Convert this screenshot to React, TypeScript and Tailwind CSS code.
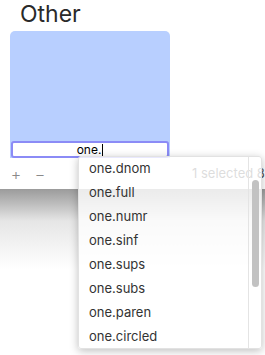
import React from 'react';

const items = ['one.dnom', 'one.full', 'one.numr', 'one.sinf', 'one.sups', 'one.subs', 'one.paren', 'one.circled'];

const App: React.FC = () => {
  return (
    <div className="relative w-[265px] h-[355px] overflow-hidden bg-white font-['Inter','Liberation_Sans',sans-serif]">
      <div className="h-[31px] pl-[20px] pt-[1px] text-[23px] leading-[27px] text-[#2a2a2a]">Other</div>

      <div className="ml-[10px] w-[160px] h-[127px] rounded-t-[5px] bg-[#b8cfff] flex flex-col justify-end">
        <div className="mx-[1px] h-[17px] rounded-[3px] border-2 border-[#8b8bf6] bg-white flex items-center justify-center">
          <span className="text-[12px] leading-[13px] text-black">one.</span>
          <span className="w-px h-[12px] bg-black ml-px" />
        </div>
      </div>

      <div className="h-[31px] flex items-center text-[#8a8a8a]">
        <span className="ml-[10px] w-[12px] text-center text-[16px] font-light">+</span>
        <span className="ml-[12px] w-[12px] text-center text-[16px] font-light">−</span>
        <span className="ml-[146px] text-[13px] whitespace-nowrap text-[#555]">1 selected 8</span>
      </div>

      <div className="h-[80px] bg-gradient-to-b from-[#9b9b9b] via-[#e6e6e6] via-40% to-white" />

      <div className="absolute left-[78px] top-[156px] w-[184px] h-[193px] flex bg-white/80 rounded-[3px] shadow-[0_2px_8px_rgba(0,0,0,0.25)] border border-[#e2e2e2]">
        <ul className="flex-1">
          {items.map((it) => (
            <li key={it} className="h-[24px] pl-[10px] flex items-center text-[13px] text-[#333]">
              {it}
            </li>
          ))}
        </ul>
        <div className="w-[13px] border-l border-[#e4e4e4] pt-[23px] pl-[3px]">
          <div className="w-[7px] h-[107px] rounded-full bg-[#c2c2c2]" />
        </div>
      </div>
    </div>
  );
};

export default App;
